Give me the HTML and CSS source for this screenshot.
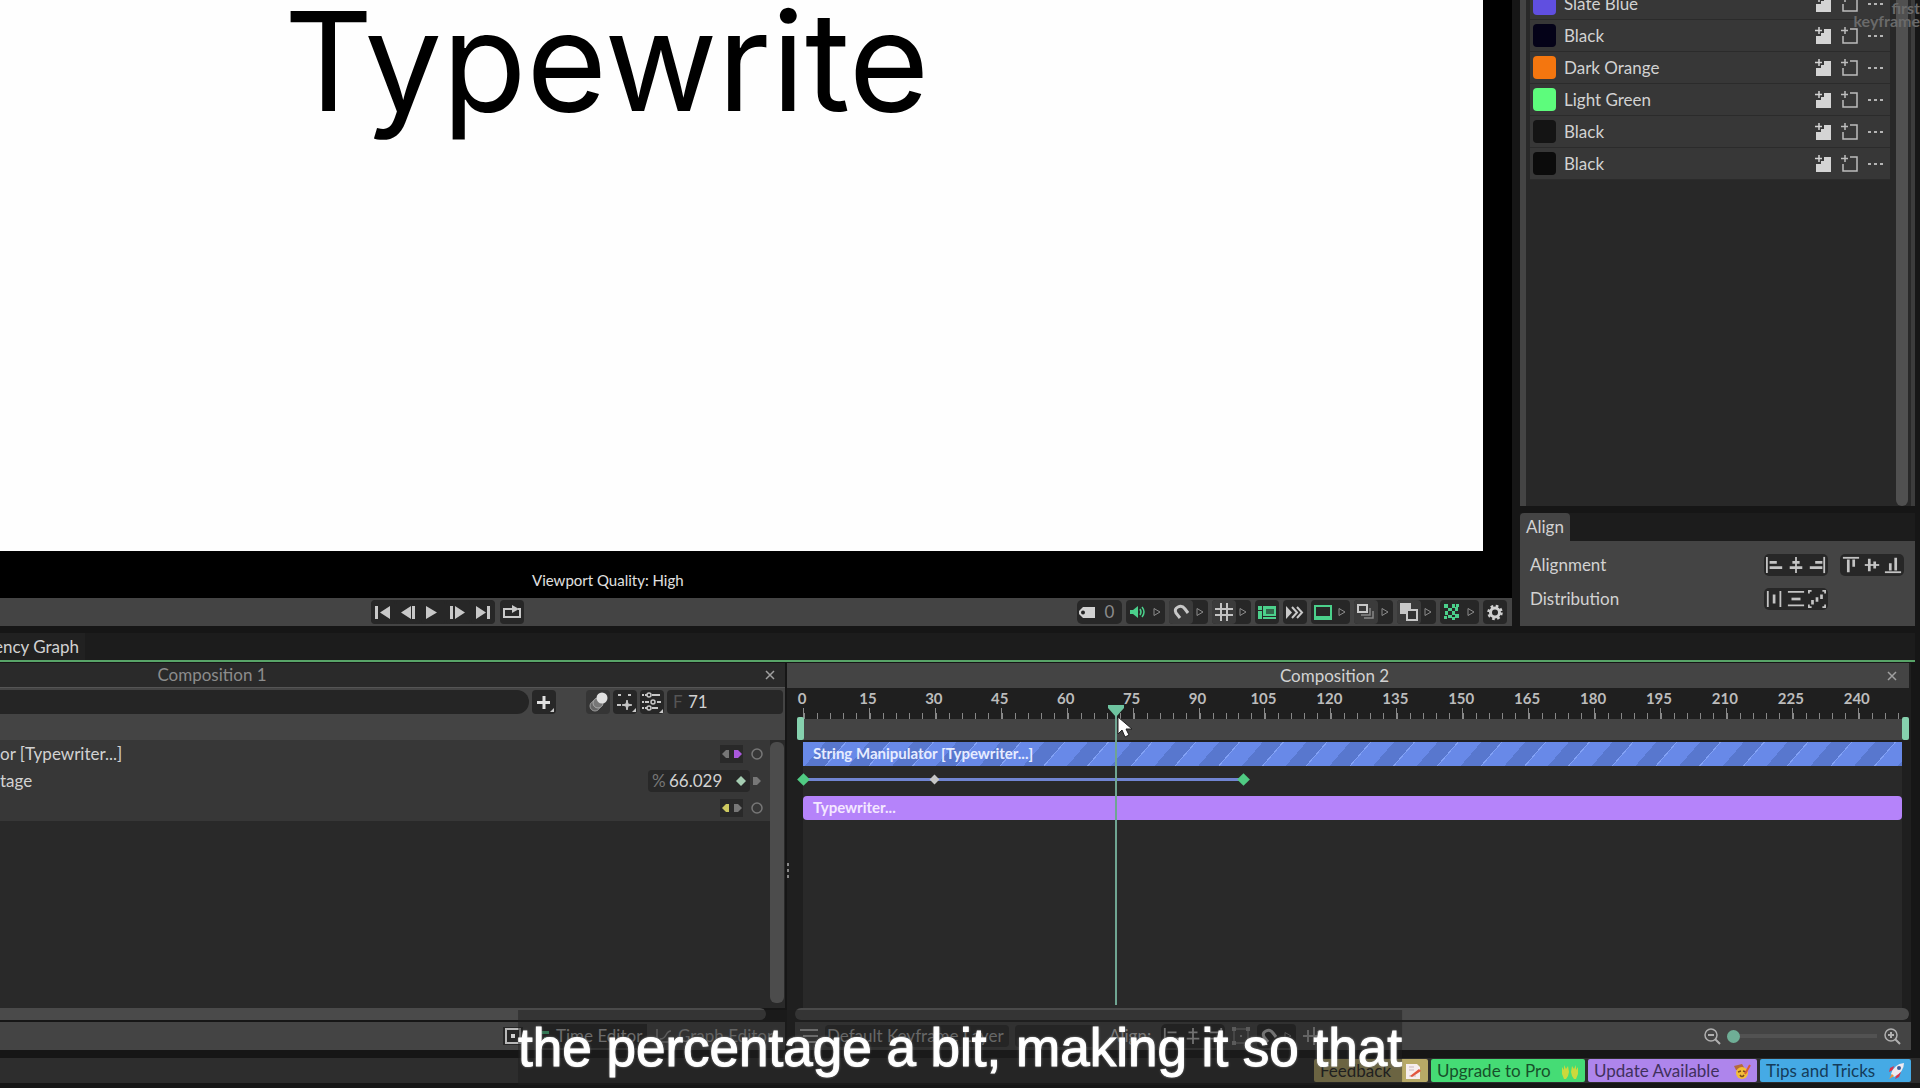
FILE: index.html
```html
<!DOCTYPE html>
<html lang="en">
<head>
<meta charset="utf-8">
<title>Composition 2</title>
<link rel="stylesheet" href="styles.css">
</head>
<body>
<svg class="defs" aria-hidden="true">
  <symbol id="fill-add" viewBox="0 0 18 18"><path d="M9 2h7v15H1V9h5V6h3z" fill="#d4d4d4"/><path d="M4 0v7M0 3.500h7" stroke="#d4d4d4" stroke-width="1.500"/></symbol>
  <symbol id="stroke-add" viewBox="0 0 18 18"><path d="M9 2h7v14H2V9" fill="none" stroke="#bdbdbd" stroke-width="1.500"/><path d="M4 0v7M0 3.500h7" stroke="#bdbdbd" stroke-width="1.500"/></symbol>
  <symbol id="dots" viewBox="0 0 18 18"><path d="M1 8h3v2H1zM7 8h3v2H7zM13 8h3v2h-3z" fill="#b4b4b4"/></symbol>
  <symbol id="drop" viewBox="0 0 10 12"><path d="M2 2.500l6 3.500-6 3.500z" fill="none" stroke="#8c8c8c"/></symbol>
  <symbol id="close" viewBox="0 0 10 10"><path d="M1 1l8 8M9 1l-8 8" stroke="#a0a0a0" stroke-width="1.500"/></symbol>
  <symbol id="magnet" viewBox="0 0 20 20"><path d="M9 16L5 11Q3 7 7 5Q11 3 14 7L17 11" fill="none" stroke="#c8c8c8" stroke-width="3"/></symbol>
</svg>
<main class="app">
  <section class="upper">
    <div class="viewport">
      <div class="stage"><h1 class="headline">Typewrite</h1></div>
      <p class="quality">Viewport Quality: High</p>
      <div class="playbar">
        <div class="group transport">
          <button class="ib" aria-label="First frame"><svg viewBox="0 0 24 24"><path d="M4 6h3v13H4zM19 6v13L9 12.500z"/></svg></button>
          <button class="ib" aria-label="Previous frame"><svg viewBox="0 0 24 24"><path d="M15 6v13L5 12.500zM16 6h3v13h-3z"/></svg></button>
          <button class="ib" aria-label="Play"><svg viewBox="0 0 24 24"><path d="M5 6v13l11-6.500z"/></svg></button>
          <button class="ib" aria-label="Next frame"><svg viewBox="0 0 24 24"><path d="M4 6h3v13H4zM9 6v13l10-6.500z"/></svg></button>
          <button class="ib" aria-label="Last frame"><svg viewBox="0 0 24 24"><path d="M5 6v13l10-6.500zM16 6h3v13h-3z"/></svg></button>
        </div>
        <button class="ib loop" aria-label="Loop"><svg viewBox="0 0 24 24"><path d="M9 9H4v8h16V9h-2" fill="none" stroke="#c8c8c8" stroke-width="2"/><path d="M8 8h4V5l7 4-7 4v-3H8z"/></svg></button>
        <span class="grow"></span>
        <div class="tools">
          <label class="group tagbox"><svg width="20" height="20" viewBox="0 0 20 20"><path d="M6 5h12v11H6l-4-4V9z" fill="#d0d0d0"/><circle cx="6" cy="10.500" r="2" fill="#222"/></svg><input value="0" aria-label="Tag"></label>
          <button class="split" aria-label="Audio"><span><svg width="20" height="20" viewBox="0 0 20 20"><path d="M2 8h3l5-4v12l-5-4H2z" fill="#4bd08b"/><path d="M12 7q2 3 0 6M14 5q4 5 0 10" fill="none" stroke="#4bd08b" stroke-width="1.500"/></svg></span><svg width="10" height="12"><use href="#drop"/></svg></button>
          <button class="split off" aria-label="Snapping"><span><svg width="20" height="20"><use href="#magnet"/></svg></span><svg width="10" height="12"><use href="#drop"/></svg></button>
          <button class="split off" aria-label="Grid"><span><svg width="20" height="20" viewBox="0 0 20 20"><path d="M7 1v18M13 1v18M1 7h18M1 13h18" stroke="#c4c4c4" stroke-width="2"/></svg></span><svg width="10" height="12"><use href="#drop"/></svg></button>
          <button class="ib" aria-label="Guides"><svg viewBox="0 0 24 24"><path d="M3 6h4v4H3zM8 6h13v10H8zM3 11h4v8H3zM8 17h13v2H8z" fill="#4bd08b"/><path d="M11 9h8v5h-8z" fill="#222" opacity=".6"/></svg></button>
          <button class="ib" aria-label="Motion"><svg viewBox="0 0 24 24"><path d="M3 6v13l6-6.500z"/><path d="M9 7l5 5.500-5 5.500M14 7l5 5.500-5 5.500" fill="none" stroke="#c8c8c8" stroke-width="2"/></svg></button>
          <button class="split" aria-label="Screen"><span><svg width="20" height="20" viewBox="0 0 20 20"><path d="M2 4h16v13H2z" fill="none" stroke="#4bd08b" stroke-width="2"/><path d="M2 14h16v3H2z" fill="#4bd08b"/></svg></span><svg width="10" height="12"><use href="#drop"/></svg></button>
          <button class="split off" aria-label="Onion skin"><span><svg width="20" height="20" viewBox="0 0 20 20"><path d="M2 3h9v7H2z" fill="none" stroke="#c8c8c8" stroke-width="2"/><path d="M5 13h9V6M8 16h9V9" fill="none" stroke="#888" stroke-width="1.500"/></svg></span><svg width="10" height="12"><use href="#drop"/></svg></button>
          <button class="split off" aria-label="Blend"><span><svg width="20" height="20" viewBox="0 0 20 20"><path d="M1 1h11v11H1z" fill="#c8c8c8"/><path d="M8 8h10v10H8z" fill="#333" stroke="#c8c8c8" stroke-width="2"/></svg></span><svg width="10" height="12"><use href="#drop"/></svg></button>
          <button class="split" aria-label="Transparency"><span><svg width="20" height="20" viewBox="0 0 20 20"><path d="M2 2h4v4H2zM10 2h3v4h-3zM14 2h3v3h-3zM6 6h4v3H6zM13 5h3v4h-3zM3 9h3v4H3zM10 9h3v4h-3zM6 13h4v3H6zM13 12h4v4h-4zM2 14h3v3H2zM10 15h3v3h-3z" fill="#4bd08b"/></svg></span><svg width="10" height="12"><use href="#drop"/></svg></button>
          <button class="ib" aria-label="Settings"><svg viewBox="0 0 24 24"><circle cx="12" cy="12.500" r="4.500" fill="none" stroke="#d0d0d0" stroke-width="3"/><circle cx="12" cy="12.500" r="6.500" fill="none" stroke="#d0d0d0" stroke-width="2.500" stroke-dasharray="2.600 2.500"/></svg></button>
        </div>
      </div>
    </div>
    <aside class="side">
      <div class="swatches">
        <ul class="colors">
          <li><i class="chip slate"></i><span>Slate Blue</span><button aria-label="Fill"><svg><use href="#fill-add"/></svg></button><button aria-label="Stroke"><svg><use href="#stroke-add"/></svg></button><button aria-label="More"><svg><use href="#dots"/></svg></button></li>
          <li><i class="chip navy"></i><span>Black</span><button aria-label="Fill"><svg><use href="#fill-add"/></svg></button><button aria-label="Stroke"><svg><use href="#stroke-add"/></svg></button><button aria-label="More"><svg><use href="#dots"/></svg></button></li>
          <li><i class="chip orange"></i><span>Dark Orange</span><button aria-label="Fill"><svg><use href="#fill-add"/></svg></button><button aria-label="Stroke"><svg><use href="#stroke-add"/></svg></button><button aria-label="More"><svg><use href="#dots"/></svg></button></li>
          <li><i class="chip green"></i><span>Light Green</span><button aria-label="Fill"><svg><use href="#fill-add"/></svg></button><button aria-label="Stroke"><svg><use href="#stroke-add"/></svg></button><button aria-label="More"><svg><use href="#dots"/></svg></button></li>
          <li><i class="chip coal"></i><span>Black</span><button aria-label="Fill"><svg><use href="#fill-add"/></svg></button><button aria-label="Stroke"><svg><use href="#stroke-add"/></svg></button><button aria-label="More"><svg><use href="#dots"/></svg></button></li>
          <li><i class="chip pitch"></i><span>Black</span><button aria-label="Fill"><svg><use href="#fill-add"/></svg></button><button aria-label="Stroke"><svg><use href="#stroke-add"/></svg></button><button aria-label="More"><svg><use href="#dots"/></svg></button></li>
        </ul>
        <div class="side-scroll"></div>
      </div>
      <button class="align-tab">Align</button>
      <div class="align-panel">
        <div class="align-row"><span class="name">Alignment</span>
          <div class="mini"><button aria-label="Align left"><svg viewBox="0 0 20 20"><path d="M1 1v18" /><path d="M4 7h8M4 13h14" stroke-width="3"/></svg></button><button aria-label="Align centre"><svg viewBox="0 0 20 20"><path d="M10 1v18"/><path d="M6 7h8M3 13h14" stroke-width="3"/></svg></button><button aria-label="Align right"><svg viewBox="0 0 20 20"><path d="M18 1v18"/><path d="M8 7h8M2 13h14" stroke-width="3"/></svg></button></div>
          <div class="mini"><button aria-label="Align top"><svg viewBox="0 0 20 20"><path d="M1 2h18"/><path d="M7 4v14M13 4v8" stroke-width="3"/></svg></button><button aria-label="Align middle"><svg viewBox="0 0 20 20"><path d="M2 10h16"/><path d="M7 3v14M13 6v8" stroke-width="3"/></svg></button><button aria-label="Align bottom"><svg viewBox="0 0 20 20"><path d="M1 18h18"/><path d="M7 8v8M13 2v14" stroke-width="3"/></svg></button></div>
        </div>
        <div class="align-row"><span class="name">Distribution</span>
          <div class="mini"><button aria-label="Distribute horizontally"><svg viewBox="0 0 20 20"><path d="M2 1v18M16 1v18"/><path d="M9 5v10" stroke-width="3"/></svg></button><button aria-label="Distribute vertically"><svg viewBox="0 0 20 20"><path d="M1 2h18M1 17h18"/><path d="M5 10h10" stroke-width="3"/></svg></button><button aria-label="Distribute in box"><svg viewBox="0 0 20 20"><path d="M1 4V1h3M16 1h3v3M19 16v3h-3M4 19H1v-3"/><path d="M5 11v5M10 8v5M15 5v5" stroke-width="3"/></svg></button></div>
          <div class="mini blank"></div>
        </div>
      </div>
    </aside>
  </section>

  <section class="dock">
    <nav class="dock-tabs"><a href="#graph">ency Graph</a></nav>
    <div class="panes">
      <div class="pane left">
        <div class="comp-tab idle"><span>Composition 1</span><button aria-label="Close Composition 1"><svg width="10" height="10"><use href="#close"/></svg></button></div>
        <div class="filters">
          <input class="search" aria-label="Search">
          <button class="ib" aria-label="Add"><svg viewBox="0 0 24 24"><path d="M12 6v13M5 12.500h13" stroke="#e0e0e0" stroke-width="3"/><path d="M22 18v4h-4z"/></svg></button>
          <div class="filter-set">
            <button class="ib lit" aria-label="Motion blur"><svg viewBox="0 0 24 24"><circle cx="9" cy="16" r="5" fill="#666" stroke="#999"/><circle cx="12" cy="13" r="5" fill="#777" stroke="#aaa"/><circle cx="16" cy="8" r="5.500" fill="#e0e0e0"/></svg></button>
            <button class="ib" aria-label="Keyframes"><svg viewBox="0 0 24 24"><path d="M14 10l1 4 4 1-4 1-1 4-1-4-4-1 4-1z" stroke="#c8c8c8"/><path d="M5 4h3v2H5zM15 4h3v2h-3zM4 14h4v2H4zM23 18v4h-4z"/></svg></button>
            <button class="ib" aria-label="Filter settings"><svg viewBox="0 0 24 24"><path d="M2 5h2M5 5h2M12 5h8M2 12h2M5 12h4M17 12h4M2 18h2M5 18h2M12 18h6" stroke="#c8c8c8" stroke-width="2"/><circle cx="9" cy="5" r="2" fill="none" stroke="#c8c8c8" stroke-width="1.500"/><circle cx="13" cy="12" r="2" fill="none" stroke="#c8c8c8" stroke-width="1.500"/><circle cx="9" cy="18" r="2" fill="none" stroke="#c8c8c8" stroke-width="1.500"/><path d="M23 19v4h-4z"/></svg></button>
          </div>
          <label class="frame-box"><span>F</span><input value="71"></label>
        </div>
        <div class="strip"></div>
        <div class="tree">
          <div class="tree-list">
            <div class="tree-row"><span class="name">or [Typewriter...]</span><svg class="ports" width="46" height="20" viewBox="0 0 46 20"><path d="M0 1h23v18H0z" fill="#292929"/><path d="M2 10l4-4h3v8H6z" fill="#777"/><path d="M22 10l-4-4h-4v8h4z" fill="#a958dc"/><circle cx="37" cy="10" r="5" fill="none" stroke="#777" stroke-width="1.500"/></svg></div>
            <div class="tree-row"><span class="name">tage</span><label class="pct"><span>%</span><input value="66.029" aria-label="Percentage"><svg width="12" height="12" viewBox="0 0 12 12"><path d="M6 1l5 5-5 5-5-5z" fill="#a5cdb2"/></svg></label><svg class="next" width="14" height="20" viewBox="0 0 14 20"><path d="M3 6h4l4 4-4 4H3z" fill="#777"/></svg></div>
            <div class="tree-row"><span class="name"></span><svg class="ports" width="46" height="20" viewBox="0 0 46 20"><path d="M0 1h23v18H0z" fill="#292929"/><path d="M2 10l4-4h3v8H6z" fill="#cdc960"/><path d="M22 10l-4-4h-4v8h4z" fill="#777"/><circle cx="37" cy="10" r="5" fill="none" stroke="#777" stroke-width="1.500"/></svg></div>
          </div>
          <div class="vbar"></div>
        </div>
        <div class="hbar"></div>
        <div class="footer-bar left-foot">
          <button class="square" aria-label="Layout"><svg width="18" height="18" viewBox="0 0 18 18"><path d="M2 2h14v14H2z" fill="none" stroke="#b8b8b8" stroke-width="2"/><path d="M7 7h4v4H7z" fill="#d0d0d0"/></svg></button>
          <button class="mode on"><svg width="12" height="14" viewBox="0 0 12 14"><path d="M0 2h8v3H0zM3 8h9v3H3z" fill="#4bd08b"/></svg>Time Editor</button>
          <button class="mode"><svg width="20" height="16" viewBox="0 0 20 16"><path d="M2 1v13h15M5 11q4 0 6-4t5-4" fill="none" stroke="#999" stroke-width="1.500"/></svg>Graph Editor</button>
        </div>
      </div>
      <div class="grip"><i></i><i></i><i></i></div>
      <div class="pane right">
        <div class="comp-tab"><span>Composition 2</span><button aria-label="Close Composition 2"><svg width="10" height="10"><use href="#close"/></svg></button></div>
        <div class="timeline">
          <div class="ruler">
            <div class="seg"><b>0</b></div><div class="seg"><b>15</b></div><div class="seg"><b>30</b></div><div class="seg"><b>45</b></div><div class="seg"><b>60</b></div><div class="seg"><b>75</b></div><div class="seg"><b>90</b></div><div class="seg"><b>105</b></div><div class="seg"><b>120</b></div><div class="seg"><b>135</b></div><div class="seg"><b>150</b></div><div class="seg"><b>165</b></div><div class="seg"><b>180</b></div><div class="seg"><b>195</b></div><div class="seg"><b>210</b></div><div class="seg"><b>225</b></div><div class="seg last"><b>240</b></div>
          </div>
          <div class="range"><i class="handle start"></i><i class="handle end"></i></div>
          <div class="tracks">
            <div class="clip blue">String Manipulator [Typewriter...]</div>
            <div class="keys"><div class="span" style="width:40%"></div>
              <i class="key" style="left:0%"></i><i class="key small" style="left:12%"></i><i class="key" style="left:40%"></i></div>
            <div class="clip violet">Typewriter...</div>
          </div>
          <div class="playhead" style="left:28.4%">
            <svg class="marker" width="18" height="12" viewBox="0 0 18 12"><path d="M1 0h16v3L9 12 1 3z" fill="#6ec4a0"/></svg>
            <svg class="cursor" width="18" height="24" viewBox="0 0 18 24"><path d="M2 2v17l4-4 3 7 4-2-3-6h6z" fill="#fff" stroke="#222"/></svg>
          </div>
        </div>
        <div class="hbar"></div>
        <div class="footer-bar right-foot">
          <svg width="20" height="18" viewBox="0 0 20 18"><path d="M1 3h18M4 9h15M4 15h15" stroke="#b8b8b8" stroke-width="2"/></svg>
          <button class="field layer">Default Keyframe Layer</button>
          <button class="field empty" aria-label="Interpolation"></button>
          <span class="caption-label">Align:</span>
          <div class="mini foot"><button aria-label="Keys left"><svg viewBox="0 0 20 20"><path d="M2 1v18M5 6h10M5 13h13"/></svg></button><button aria-label="Keys centre"><svg viewBox="0 0 20 20"><path d="M10 1v18M5 6h10M3 13h14"/></svg></button><button aria-label="Keys right"><svg viewBox="0 0 20 20"><path d="M18 1v18M5 6h10M2 13h13"/></svg></button></div>
          <svg width="20" height="20" viewBox="0 0 20 20"><path d="M3 3h14v14H3z" fill="none" stroke="#999"/><path d="M1 1h4v4H1zM15 1h4v4h-4zM1 15h4v4H1zM15 15h4v4h-4zM9 9h2v2H9z" fill="#999"/></svg>
          <button class="split" aria-label="Snap keys"><span><svg width="20" height="20"><use href="#magnet"/></svg></span><svg width="10" height="12"><use href="#drop"/></svg></button>
          <svg width="20" height="20" viewBox="0 0 20 20"><path d="M1 10h18M6 4v12M12 1v18M16 5v10" stroke="#aaa" stroke-width="2"/></svg>
          <span class="grow"></span>
          <div class="zoomer">
            <svg width="18" height="18" viewBox="0 0 18 18"><circle cx="8" cy="8" r="6" fill="none" stroke="#b0b0b0" stroke-width="1.500"/><path d="M5 8h6M12 12l5 5" stroke="#b0b0b0" stroke-width="2"/></svg>
            <input type="range" min="0" max="100" value="0" aria-label="Timeline zoom">
            <svg width="18" height="18" viewBox="0 0 18 18"><circle cx="8" cy="8" r="6" fill="none" stroke="#b0b0b0" stroke-width="1.500"/><path d="M5 8h6M8 5v6M12 12l5 5" stroke="#b0b0b0" stroke-width="2"/></svg>
          </div>
        </div>
      </div>
    </div>
  </section>
  <footer class="status">
    <button class="pill olive">Feedback <svg viewBox="0 0 18 18"><path d="M2 2h11l3 3v12H2z" fill="#f6eeee"/><path d="M5 5h5M5 8h5M5 14h7" stroke="#c9b9bd"/><path d="M6 14l9-7 2 2-9 6z" fill="#e2553f"/></svg></button>
    <button class="pill lime">Upgrade to Pro <svg viewBox="0 0 18 18"><path d="M1 5l2 3 0-5 2 4 2-3 1 6-1 4-2 3H3l-2-5zM17 5l-2 3 0-5-2 4-2-3-1 6 1 4 2 3h2l2-5z" fill="#c9d93c"/></svg></button>
    <button class="pill lilac">Update Available <svg viewBox="0 0 18 18"><path d="M1 4l8-2 3 5-9 1z" fill="#b56a3c"/><circle cx="9" cy="11" r="6" fill="#f3bd37"/><path d="M5 10l3-1M10 9l3 1M7 13q2 3 4 0" stroke="#7b4a1c" stroke-width="1.500" fill="none"/><path d="M12 12l5-9" stroke="#d95e36" stroke-width="2"/></svg></button>
    <button class="pill sky">Tips and Tricks <svg viewBox="0 0 18 18"><path d="M6 8L2 10l1-4 4-2zM10 12l-2 5 4-2 2-5z" fill="#d8344c"/><path d="M4 12Q7 2 17 1 17 10 7 15z" fill="#efeaf0"/><circle cx="12" cy="6" r="2" fill="#3a5f9b"/><path d="M5 12l2 2-5 3z" fill="#f3923b"/></svg></button>
  </footer>
  <p class="watermark">first<br>keyframe</p>
  <p class="subtitle">the percentage a bit, making it so that</p>
</main>
</body>
</html>
```

FILE: styles.css
```css
* { box-sizing: border-box; }
html { background: #1a1a1a; }
body { margin: 0; font-family: Lato, sans-serif; font-size: 17px; line-height: 20px; color: #d2d2d2; }
h1, p, ul { margin: 0; padding: 0; font-weight: 400; }
button, input { margin: 0; padding: 0; border: 0; background: none; color: inherit; font: inherit; outline: 0; }
svg { display: block; flex: none; }
.defs { position: absolute; width: 0; height: 0; }
.grow { flex: 1; }
.app { position: relative; display: flex; flex-direction: column; min-height: 100vh; padding-bottom: 5px; overflow: hidden; background: #161616; }

.upper { display: grid; grid-template-columns: 1fr 395px; gap: 8px; flex: 626 1 0; padding-right: 5px; }
.viewport { display: flex; flex-direction: column; background: #000; min-width: 0; }
.stage { flex: 1; margin-right: 29px; padding-left: 284px; background: #fefefe; }
.headline { font-family: Inter, sans-serif; font-size: 138px; line-height: 122px; font-weight: 400; color: #000; }
.quality { padding: 19px 0 8px 532px; font-size: 15px; color: #e0e0e0; }
.playbar { display: flex; align-items: center; height: 28px; padding: 0 5px 0 371px; background: #444; }
.group { display: flex; background: #272727; border-radius: 5px; }
.ib { width: 24px; height: 24px; background: #272727; border-radius: 4px; fill: #c8c8c8; flex: none; }
.ib svg { width: 24px; height: 24px; }
.transport { gap: 1px; }
.loop { margin-left: 5px; }
.tools { display: flex; gap: 4px; }
.tagbox { width: 45px; height: 24px; align-items: center; }
.tagbox input { width: 25px; text-align: center; color: #8c8c8c; }
.split { display: flex; align-items: center; width: 39px; height: 24px; padding-right: 3px; background: #272727; border-radius: 4px; justify-content: space-between; }
.split span { display: flex; align-items: center; justify-content: center; width: 24px; height: 24px; border-radius: 4px; }
.split.off span { background: #3b3b3b; }

.side { display: flex; flex-direction: column; align-items: stretch; background: #1c1c1c; }
.swatches { display: flex; flex: 1; border-left: 6px solid #444; border-right: 4px solid #3c3c3c; background: #282828; box-shadow: 0 7px #161616; overflow: hidden; }
.colors { flex: 1; list-style: none; margin: -12px 6px 0 4px; }
.colors li { display: flex; align-items: center; height: 32px; padding: 0 5px 0 3px; background: #373737; border-bottom: 1px solid #2b2b2b; }
.colors span { flex: 1; padding-left: 8px; }
.colors button { width: 18px; margin-left: 8px; }
.colors svg { width: 18px; height: 18px; }
.chip { width: 23px; height: 23px; border-radius: 4px; }
.slate { background: #604fe0; }
.navy { background: #040218; }
.orange { background: #f4760f; }
.green { background: #5dfc7c; }
.coal { background: #141414; }
.pitch { background: #0b0b0b; }
.side-scroll { width: 12px; margin-right: 3px; border-radius: 0 0 6px 6px; background: #505050; }
.align-tab { align-self: flex-start; margin-top: 7px; height: 28px; padding: 0 6px; background: #444; border-radius: 4px 4px 0 0; }
.align-panel { display: flex; flex-direction: column; gap: 12px; height: 85px; padding: 13px 11px 0 10px; background: #444; }
.align-row { display: flex; align-items: center; gap: 12px; }
.align-row .name { flex: 1; }
.mini { display: flex; width: 64px; height: 22px; padding: 0 1px; background: #272727; border-radius: 5px; }
.mini.blank { visibility: hidden; }
.mini button { width: 21px; }
.mini svg { width: 18px; height: 18px; margin: auto; fill: none; stroke: #c4c4c4; stroke-width: 2; }
.mini.foot { height: 24px; }

.dock { display: flex; flex-direction: column; flex: 424 1 0; }
.dock-tabs { display: flex; margin-top: 7px; margin-right: 5px; height: 29px; background: #1c1c1c; border-bottom: 2px solid #58a468; }
.dock-tabs a { display: flex; align-items: center; justify-content: flex-end; width: 85px; padding-right: 6px; overflow: hidden; background: #212121; color: #d2d2d2; text-decoration: none; white-space: nowrap; }
.panes { display: grid; grid-template-columns: 785px 6px 1fr; flex: 1; padding-right: 9px; padding-top: 1px; }
.pane { display: flex; flex-direction: column; min-width: 0; }
.right { margin-left: -4px; background: #1f1f1f; }
.comp-tab { display: flex; align-items: center; height: 25px; padding-right: 12px; background: #444; margin-right: 2px; }
.comp-tab span { flex: 1; text-align: center; padding-right: 5px; }
.comp-tab button { width: 10px; }
.comp-tab.idle { margin: 0; padding-right: 10px; background: #2a2a2a; border-bottom: 1px solid #555; color: #8c8c8c; }
.comp-tab.idle span { padding-right: 341px; }
.filters { display: flex; align-items: center; gap: 3px; height: 27px; padding-right: 2px; background: #444; }
.search { width: 529px; height: 24px; background: #252525; border-radius: 0 12px 12px 0; }
.filter-set { display: flex; gap: 3px; margin-left: 27px; }
.ib.lit { background: #353535; }
.frame-box { display: flex; align-items: center; flex: 1; height: 24px; padding-left: 6px; background: #272727; border-radius: 4px; }
.frame-box span { width: 15px; color: #555; }
.frame-box input { width: 60px; }
.strip { height: 25px; background: #444; }
.tree { display: flex; flex: 1; background: #292929; }
.tree-list { flex: 1; }
.tree-row { display: flex; align-items: center; height: 27px; padding-right: 2px; background: #373737; }
.tree-row .name { flex: 1; }
.pct { display: flex; align-items: center; width: 102px; height: 22px; padding: 0 3px 0 4px; background: #282828; border-radius: 4px; }
.pct span { width: 17px; color: #777; }
.pct input { width: 66px; }
.next { margin-right: 4px; }
.ports { margin-right: 2px; }
.vbar { width: 14px; margin: 2px 1px 5px 0; border-radius: 6px; background: #4c4c4c; }
.hbar { height: 12px; margin-right: 19px; border-radius: 0 6px 6px 0; background: #4a4a4a; }
.footer-bar { display: flex; align-items: center; height: 28px; margin-top: 2px; background: #444; }
.left-foot { padding-left: 503px; }
.square { width: 20px; padding: 0 1px; background: #272727; }
.mode { display: flex; align-items: center; gap: 3px; height: 24px; padding-left: 8px; color: #a8a8a8; white-space: nowrap; }
.mode.on { width: 106px; margin-left: 18px; padding-left: 0; background: #262626; color: #b8b8b8; }

.grip { position: relative; z-index: 1; display: flex; flex-direction: column; justify-content: center; gap: 3px; padding: 28px 0 0 2px; }
.grip i { width: 2px; height: 3px; background: #888; }
.timeline { position: relative; display: flex; flex-direction: column; flex: 1; margin: 0 9px 0 16px; }
.ruler { display: flex; height: 31px; }
.seg { flex: 15; min-width: 0; border-left: 1px solid #888; border-image: linear-gradient(transparent 20px, #888 20px) 1; background: repeating-linear-gradient(90deg, #888 0 1px, transparent 1px 20%) left bottom / 100% 6px no-repeat; }
.seg.last { flex: 10; background: repeating-linear-gradient(90deg, #888 0 1px, transparent 1px 30%) left bottom / 100% 6px no-repeat; }
.seg b { display: block; width: 40px; margin-left: -22px; text-align: center; font-size: 15px; font-weight: 700; color: #bcbcbc; }
.range { display: flex; justify-content: space-between; height: 21px; margin-bottom: 2px; background: #444; }
.handle { width: 7px; height: 23px; margin: -2px -7px 0 -6px; background: #86d1ae; border-radius: 2px; }
.tracks { flex: 1; background: #292929; }
.clip { height: 24px; padding-left: 10px; overflow: hidden; font-size: 15px; line-height: 23px; font-weight: 700; color: #e6ecff; white-space: nowrap; }
.blue { background: repeating-linear-gradient(131deg, #6889e8 0 17px, #5877ce 17px 32px, #83a2f6 32px 33px); }
.violet { border-radius: 4px; background: #b583fa; color: #f4e8ff; }
.keys { position: relative; height: 30px; padding-top: 12px; }
.span { height: 3px; background: #7185d2; }
.key { position: absolute; top: 9px; width: 9px; height: 9px; margin-left: -4px; background: #50cb83; transform: rotate(45deg); }
.key.small { top: 10px; width: 7px; height: 7px; background: #c6c6c6; }
.playhead { position: absolute; top: 17px; bottom: 3px; width: 2px; background: #6fa592; }
.marker { position: absolute; top: 0; left: -8px; }
.cursor { position: absolute; top: 10px; left: 1px; }
.right .hbar { margin: 0 2px 0 8px; border-radius: 6px; }
.right-foot { margin-left: 8px; padding: 0 10px 0 4px; gap: 6px; }
.field { height: 22px; padding: 0 2px; background: #2c2c2c; border-radius: 4px; color: #b0b0b0; white-space: nowrap; }
.layer { width: 184px; text-align: left; }
.empty { width: 84px; }
.caption-label { width: 50px; padding-left: 4px; }
.zoomer { display: flex; align-items: center; gap: 6px; }
.zoomer input { width: 150px; height: 14px; appearance: none; background: linear-gradient(#525252, #525252) center / 100% 4px no-repeat; }
.zoomer input::-webkit-slider-thumb { appearance: none; width: 13px; height: 13px; border-radius: 50%; background: #6fae96; }

.status { display: flex; justify-content: flex-end; align-items: center; gap: 3px; height: 25px; margin-top: 8px; padding-right: 9px; background: #2d2d2d; }
.pill { display: flex; align-items: center; justify-content: space-between; height: 23px; padding: 0 6px; border-radius: 2px; color: #222; white-space: nowrap; }
.pill svg { width: 18px; height: 18px; }
.olive { width: 114px; background: #b8aa66; }
.lime { width: 154px; background: #45dc75; color: #17502a; }
.lilac { width: 169px; background: #ae85ec; color: #40305c; }
.sky { width: 151px; background: #45aae5; color: #143c5a; }

.watermark { position: absolute; top: 1px; right: 0; font-size: 16px; line-height: 13px; font-weight: 700; text-align: right; color: #6a6a6a; }
.subtitle { position: absolute; left: 50%; bottom: 3px; transform: translateX(-50%); height: 75px; background: rgba(30, 30, 30, .5); font-family: "Liberation Sans", sans-serif; font-size: 53px; line-height: 75px; color: #fff; white-space: nowrap; -webkit-text-stroke: 1px #fff; text-shadow: 0 0 3px #888, 0 0 2px #888; }
```
